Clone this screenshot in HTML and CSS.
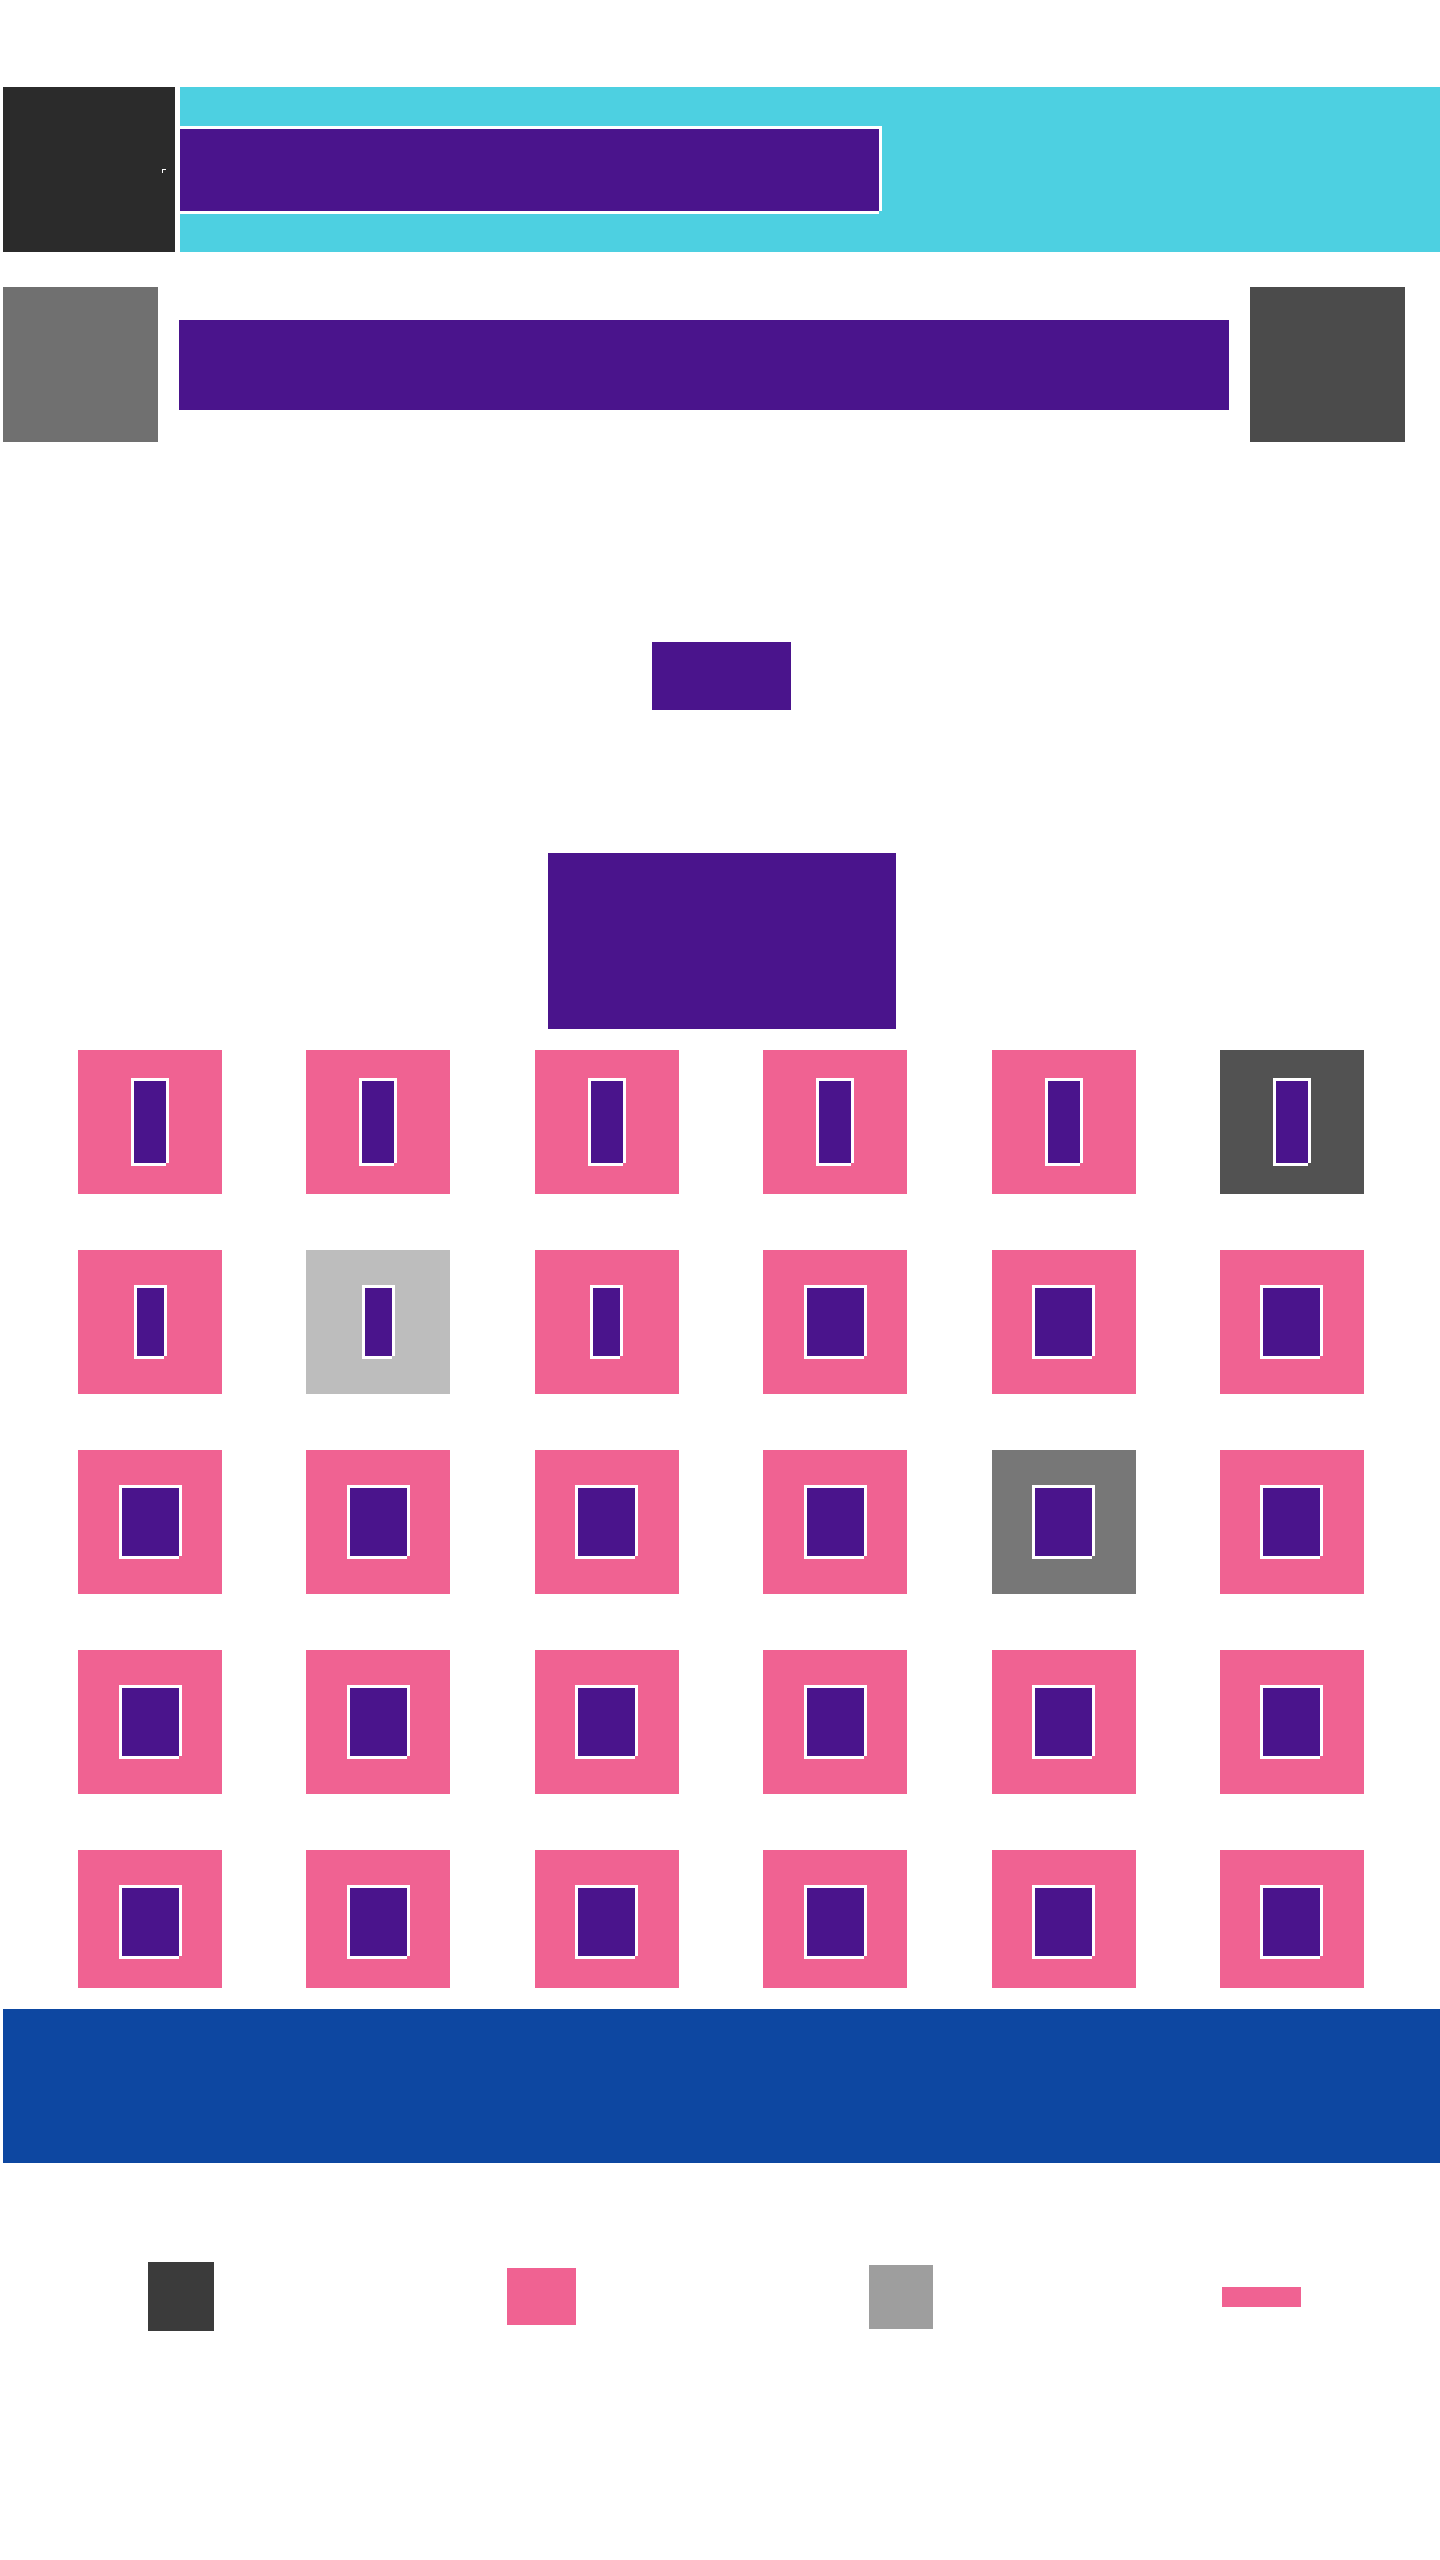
FILE: index.html
```html
<!DOCTYPE html>
<html lang="en">
<head>
<meta charset="utf-8">
<title>Layout</title>
<link rel="stylesheet" href="styles.css">
</head>
<body>
<div class="page">
  <header class="header">
    <div class="brand"><span class="caret"></span></div>
    <div class="banner"><div class="title frame"></div></div>
  </header>

  <section class="toolbar">
    <div class="tool tool-left"></div>
    <div class="search"></div>
    <div class="tool tool-right"></div>
  </section>

  <div class="label-small"></div>
  <div class="label-large"></div>

  <section class="grid">
    <div class="grid-row">
      <div class="tile"><div class="frame tall"></div></div>
      <div class="tile"><div class="frame tall"></div></div>
      <div class="tile"><div class="frame tall"></div></div>
      <div class="tile"><div class="frame tall"></div></div>
      <div class="tile"><div class="frame tall"></div></div>
      <div class="tile tile-dark"><div class="frame tall"></div></div>
    </div>
    <div class="grid-row">
      <div class="tile"><div class="frame slim"></div></div>
      <div class="tile tile-light"><div class="frame slim"></div></div>
      <div class="tile"><div class="frame slim"></div></div>
      <div class="tile"><div class="frame wide"></div></div>
      <div class="tile"><div class="frame wide"></div></div>
      <div class="tile"><div class="frame wide"></div></div>
    </div>
    <div class="grid-row">
      <div class="tile"><div class="frame wide"></div></div>
      <div class="tile"><div class="frame wide"></div></div>
      <div class="tile"><div class="frame wide"></div></div>
      <div class="tile"><div class="frame wide"></div></div>
      <div class="tile tile-mid"><div class="frame wide"></div></div>
      <div class="tile"><div class="frame wide"></div></div>
    </div>
    <div class="grid-row">
      <div class="tile"><div class="frame wide"></div></div>
      <div class="tile"><div class="frame wide"></div></div>
      <div class="tile"><div class="frame wide"></div></div>
      <div class="tile"><div class="frame wide"></div></div>
      <div class="tile"><div class="frame wide"></div></div>
      <div class="tile"><div class="frame wide"></div></div>
    </div>
    <div class="grid-row">
      <div class="tile"><div class="frame wide"></div></div>
      <div class="tile"><div class="frame wide"></div></div>
      <div class="tile"><div class="frame wide"></div></div>
      <div class="tile"><div class="frame wide"></div></div>
      <div class="tile"><div class="frame wide"></div></div>
      <div class="tile"><div class="frame wide"></div></div>
    </div>
  </section>

  <section class="band"></section>

  <footer class="legend">
    <div class="legend-cell"><span class="swatch swatch-dark"></span></div>
    <div class="legend-cell"><span class="swatch swatch-pink"></span></div>
    <div class="legend-cell"><span class="swatch swatch-grey"></span></div>
    <div class="legend-cell"><span class="swatch swatch-bar"></span></div>
  </footer>
</div>
</body>
</html>
```

FILE: styles.css
```css
* { box-sizing: border-box; }

html, body {
  margin: 0;
  padding: 0;
  background: #ffffff;
  font-family: "Liberation Sans", Arial, sans-serif;
}

.page {
  width: 1440px;
  padding-left: 3px;
}

/* frame: purple block with a white outline missing its bottom-right corner */
.frame {
  background: #4a148c;
  box-shadow:
    -3px -3px 0 #fff,
    0 -3px 0 #fff,
    3px -3px 0 #fff,
    -3px 0 0 #fff,
    3px 0 0 #fff,
    -3px 3px 0 #fff,
    0 3px 0 #fff;
}

/* header */
.header {
  margin-top: 87px;
  height: 165px;
  display: flex;
  gap: 5px;
}

.brand {
  width: 172px;
  background: #2b2b2b;
  display: flex;
  align-items: center;
  justify-content: flex-end;
  padding-right: 9px;
  padding-top: 2px;
}

.caret {
  display: block;
  width: 4px;
  height: 4px;
  border-top: 1px solid #fff;
  border-left: 1px solid #fff;
}

.banner {
  flex: 1;
  background: #4dd0e1;
  display: flex;
  align-items: center;
}

.title {
  width: 699px;
  height: 82px;
}

/* toolbar */
.toolbar {
  margin-top: 35px;
  display: flex;
  align-items: center;
  gap: 21px;
}

.tool {
  width: 155px;
  height: 155px;
}

.tool-left { background: #707070; }
.tool-right { background: #4b4b4b; }

.search {
  width: 1050px;
  height: 90px;
  background: #4a148c;
}

/* labels */
.label-small {
  margin: 200px auto 0;
  width: 139px;
  height: 68px;
  background: #4a148c;
}

.label-large {
  margin: 143px auto 0;
  width: 348px;
  height: 176px;
  background: #4a148c;
}

/* grid */
.grid {
  margin-top: 21px;
  height: 938px;
  overflow: hidden;
  padding: 0 76px 0 75px;
  display: flex;
  flex-direction: column;
  gap: 56px;
}

.grid-row {
  display: flex;
  justify-content: space-between;
  flex: none;
}

.tile {
  width: 144px;
  height: 144px;
  flex: none;
  background: #f06292;
  display: flex;
  align-items: center;
  justify-content: center;
}

.tile-dark { background: #525252; }
.tile-light { background: #bdbdbd; }
.tile-mid { background: #777777; }

.tall { width: 32px; height: 82px; }
.slim { width: 27px; height: 68px; }
.wide { width: 57px; height: 68px; }

/* band */
.band {
  margin-top: 21px;
  height: 154px;
  background: #0d47a1;
}

/* legend */
.legend {
  margin-top: 99px;
  margin-left: -2px;
  width: 1440px;
  height: 69px;
  display: flex;
  align-items: center;
}

.legend-cell {
  flex: 1;
  display: flex;
  justify-content: center;
  align-items: center;
}

.swatch { display: block; }
.swatch-dark { width: 66px; height: 69px; background: #3b3b3b; }
.swatch-pink { width: 69px; height: 57px; background: #f06292; }
.swatch-grey { width: 64px; height: 64px; background: #9e9e9e; }
.swatch-bar { width: 79px; height: 20px; background: #f06292; }
```
